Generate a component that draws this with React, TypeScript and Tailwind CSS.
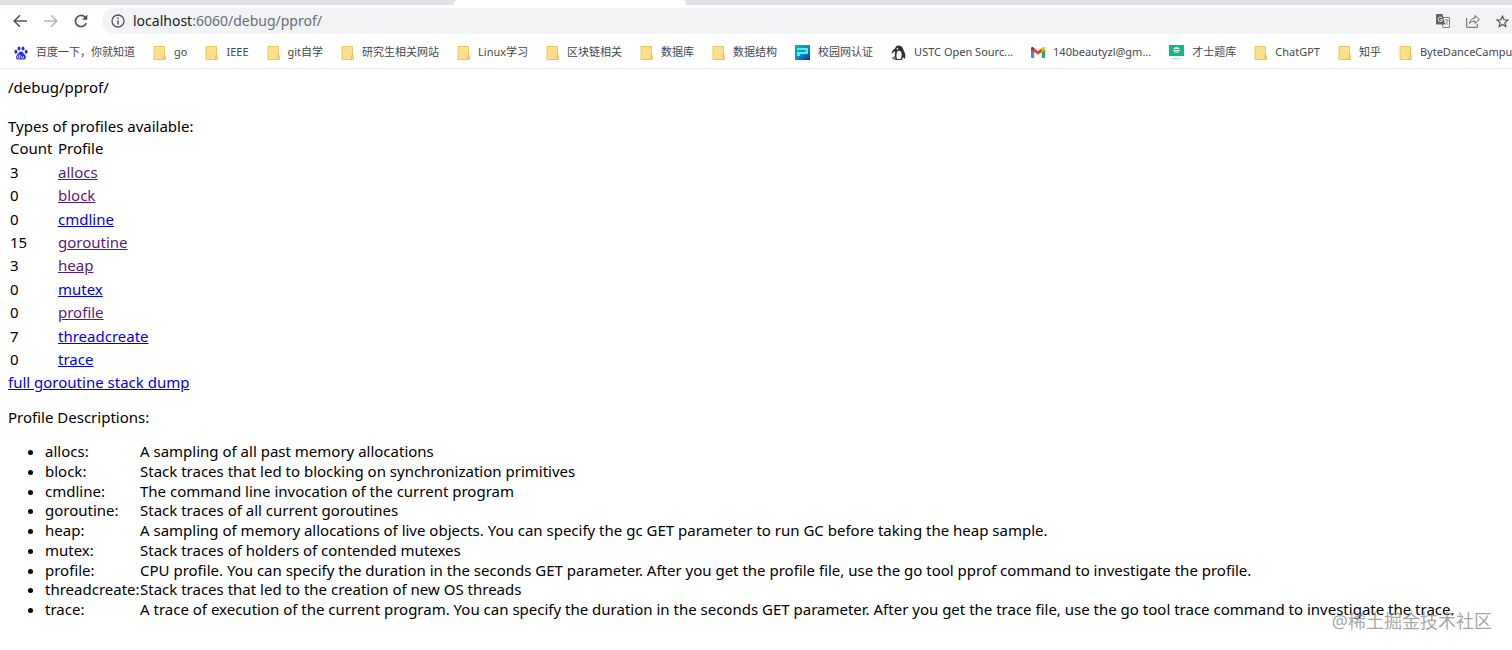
import type { ReactNode } from 'react'

const profiles = [
  { name: 'allocs', count: 3, visited: true, text: 'A sampling of all past memory allocations' },
  { name: 'block', count: 0, visited: true, text: 'Stack traces that led to blocking on synchronization primitives' },
  { name: 'cmdline', count: 0, visited: false, text: 'The command line invocation of the current program' },
  { name: 'goroutine', count: 15, visited: true, text: 'Stack traces of all current goroutines' },
  { name: 'heap', count: 3, visited: true, text: 'A sampling of memory allocations of live objects. You can specify the gc GET parameter to run GC before taking the heap sample.' },
  { name: 'mutex', count: 0, visited: false, text: 'Stack traces of holders of contended mutexes' },
  { name: 'profile', count: 0, visited: true, text: 'CPU profile. You can specify the duration in the seconds GET parameter. After you get the profile file, use the go tool pprof command to investigate the profile.' },
  { name: 'threadcreate', count: 7, visited: false, text: 'Stack traces that led to the creation of new OS threads' },
  { name: 'trace', count: 0, visited: false, text: 'A trace of execution of the current program. You can specify the duration in the seconds GET parameter. After you get the trace file, use the go tool trace command to investigate the trace.' },
]

const Folder = () => (
  <svg className="h-[14px] w-[13px] shrink-0" viewBox="0 0 13 14">
    <path d="M1 .5h10.5v8l1 1.5v3.5H1z" fill="#fee08a" stroke="#ecc65a" />
    <path d="M11.5 8.5 10 13.5" stroke="#e6bb48" fill="none" />
  </svg>
)

const Baidu = () => (
  <svg className="h-[14px] w-[14px] shrink-0" viewBox="0 0 14 14" fill="#2a2fd8">
    <ellipse cx="1.9" cy="5.8" rx="1.5" ry="2" />
    <ellipse cx="5" cy="2.5" rx="1.5" ry="2.1" />
    <ellipse cx="9" cy="2.5" rx="1.5" ry="2.1" />
    <ellipse cx="12.1" cy="5.8" rx="1.5" ry="2" />
    <path d="M7 5.6c1.8 0 2.3 1.8 3.6 2.9 1.8 1.5 1.8 4.9-.8 5.1-1 .1-1.8-.3-2.8-.3s-1.8.4-2.8.3c-2.6-.2-2.6-3.6-.8-5.1C4.7 7.4 5.2 5.6 7 5.6z" />
    <path d="M5.8 8.5v3.6H4.5a1 1 0 0 1 0-2.2h1.3M7.5 9.9v1.5q0 .7.7.7h1.2V9.9" stroke="#fff" strokeWidth=".7" fill="none" />
  </svg>
)

const Campus = () => (
  <svg className="h-[15px] w-[15px] shrink-0" viewBox="0 0 15 15">
    <defs>
      <linearGradient id="campus" x1="0" y1="0" x2="1" y2="1">
        <stop offset="0" stopColor="#08b5bd" />
        <stop offset=".5" stopColor="#0797c4" />
        <stop offset="1" stopColor="#0a2fa0" />
      </linearGradient>
    </defs>
    <path d="M0 0h15v15H0z" fill="url(#campus)" />
    <path d="M2 3h11v6H5v2H2V7h8.5V5H2z" fill="#5cebe4" />
  </svg>
)

const Penguin = () => (
  <svg className="h-[15px] w-[15px] shrink-0" viewBox="0 0 15 15">
    <path d="M5 1.5C6.5 0 9.5 0 11 2c1.2 1.5 1.5 3 2.2 4.5 1.3 2.5 1.8 5 .3 7.5l-1.5-2-1 3H5.5l-4-1 2.5-2.5C3.5 9 4 7.5 4 6L.5 9c0-2.5 2-5 3.5-5.5z" fill="#2b3338" />
    <path d="M6.5 6c2-.8 3.5 0 4 2 .3 2 .2 4-.8 6H6C5 11 5.5 8 6.5 6z" fill="#fff" />
    <path d="M5 3.5 7.5 3 6.5 5z" fill="#dfe5e8" />
    <path d="M1 12.5l2.5-1.5L5 14l-3 .5z" fill="#7b878d" />
  </svg>
)

const Gmail = () => (
  <svg className="h-[11px] w-[14px] shrink-0" viewBox="0 0 14 11">
    <path d="M0 2v8q0 1 1 1h2.2V4.5z" fill="#4285f4" />
    <path d="M14 2v8q0 1-1 1h-2.2V4.5z" fill="#34a853" />
    <path d="M10.8 1.2V5L14 2.6V1.5C14 0 12.4-.3 11.4.5z" fill="#fbbc04" />
    <path d="M3.2 5V1.2L7 4l3.8-2.8V5L7 7.8z" fill="#ea4335" />
    <path d="M0 1.5v1.1L3.2 5V1.2L2.6.5C1.6-.3 0 0 0 1.5z" fill="#c5221f" />
  </svg>
)

const Exam = () => (
  <svg className="h-[15px] w-[15px] shrink-0" viewBox="0 0 15 15">
    <path d="M0 0h15v11H0z" fill="#12b883" />
    <circle cx="7.5" cy="5" r="3" fill="#d8f6ec" />
    <path d="M5 4.5h5M6 6.5q1.5 1 3 0" stroke="#12b883" fill="none" />
    <path d="M3.5 13.5h8" stroke="#9fe3cc" />
  </svg>
)

type Bookmark = { label: string; icon?: ReactNode }

const bookmarks: Bookmark[] = [
  { label: '百度一下，你就知道', icon: <Baidu /> },
  { label: 'go' },
  { label: 'IEEE' },
  { label: 'git自学' },
  { label: '研究生相关网站' },
  { label: 'Linux学习' },
  { label: '区块链相关' },
  { label: '数据库' },
  { label: '数据结构' },
  { label: '校园网认证', icon: <Campus /> },
  { label: 'USTC Open Sourc...', icon: <Penguin /> },
  { label: '140beautyzl@gm...', icon: <Gmail /> },
  { label: '才士题库', icon: <Exam /> },
  { label: 'ChatGPT' },
  { label: '知乎' },
  { label: 'ByteDanceCampus' },
]

function TabStrip() {
  return (
    <div className="flex h-[5px] bg-[#dee1e6]">
      <div className="ml-[30%] h-full w-[232px] rounded-t-sm bg-white"></div>
    </div>
  )
}

function Toolbar() {
  return (
    <div className="flex h-8 items-center pl-3 text-[#5f6368]">
      <button aria-label="Back" className="flex h-4 w-4 items-center justify-center">
        <svg className="h-4 w-4" viewBox="0 0 16 16" fill="none" stroke="#50545a" strokeWidth="1.6">
          <path d="M15 8H2.5M8 2.2 2.2 8 8 13.8" />
        </svg>
      </button>
      <button aria-label="Forward" className="ml-[15px] flex h-4 w-4 items-center justify-center">
        <svg className="h-4 w-4" viewBox="0 0 16 16" fill="none" stroke="#b4b7ba" strokeWidth="1.5">
          <path d="M1 8h12.5M8 2.2 13.8 8 8 13.8" />
        </svg>
      </button>
      <button aria-label="Reload" className="ml-[14px] flex h-4 w-4 items-center justify-center">
        <svg className="h-4 w-4" viewBox="0 0 16 16" fill="none" stroke="#50545a" strokeWidth="1.7">
          <path d="M13.3 10A5.6 5.6 0 1 1 12 4.1L13.3 5.4" />
          <path d="M14.3 1.5v5.2H9.1z" fill="#50545a" stroke="none" />
        </svg>
      </button>
      <div className="ml-[13px] flex h-[26px] min-w-0 flex-1 items-center rounded-l-full bg-[#f1f3f4] pl-[9px]">
        <svg className="h-[14px] w-[14px] shrink-0" viewBox="0 0 14 14" fill="none" stroke="#50545a" strokeWidth="1.3">
          <circle cx="7" cy="7" r="6" />
          <path d="M7 6.2v4.2M7 3.5v1.4" strokeWidth="1.5" />
        </svg>
        <span className="ml-2 flex-1 text-sm text-[#6a6e73]">
          <span className="text-[#202124]">localhost</span>:6060/debug/pprof/
        </span>
        <button aria-label="Translate this page" className="h-[14px] w-[14px]">
          <svg className="h-[14px] w-[14px]" viewBox="0 0 14 14">
            <path d="M5 3.5h8.4v10H7z" fill="#fff" stroke="#777b80" />
            <path d="M0 1q0-1 1-1h5.5l2.7 10.5H1q-1 0-1-1z" fill="#5f6368" />
            <path d="M6.3 4.2A2.2 2.2 0 1 0 6.6 5.7H4.5" stroke="#fff" fill="none" />
            <path d="M8.5 6h4M10.5 5v1M9 10.5Q11.5 9 12 6M9.5 7.5q1 2 2.5 3" stroke="#777b80" strokeWidth=".8" fill="none" />
          </svg>
        </button>
        <button aria-label="Share" className="ml-4 h-[14px] w-[14px]">
          <svg className="h-[14px] w-[14px]" viewBox="0 0 14 14" fill="none" stroke="#5f6368">
            <path d="M.7 4v9.3h10.6V10" />
            <path d="M3.5 9.5C4 6 6 4.2 9 4V1.5l4.3 4-4.3 4V7C6.5 7 4.8 7.8 3.5 9.5z" />
          </svg>
        </button>
        <button aria-label="Bookmark this page" className="ml-4 mr-[3px] h-[13px] w-[13px]">
          <svg className="h-[13px] w-[13px]" viewBox="0 0 13 13" fill="none" stroke="#50545a" strokeWidth="1.2">
            <path d="M6.5 1.2 8 4.8l3.9.3-3 2.5.9 3.8-3.3-2-3.3 2 .9-3.8-3-2.5L5 4.8z" />
          </svg>
        </button>
      </div>
    </div>
  )
}

function BookmarkBar() {
  return (
    <nav className="flex h-8 items-center gap-[18px] overflow-hidden border-b border-[#e4e5e7] pl-[14px] text-[11px] text-[#45484c]">
      {bookmarks.map((b) => (
        <a key={b.label} href="#" className="flex shrink-0 items-center gap-2 whitespace-nowrap">
          {b.icon ?? <Folder />}
          {b.label}
        </a>
      ))}
    </nav>
  )
}

export default function App() {
  return (
    <div className="relative min-h-screen overflow-hidden bg-white font-['Noto_Sans','Noto_Sans_CJK_SC',sans-serif]">
      <TabStrip />
      <Toolbar />
      <BookmarkBar />

      {/* pprof index */}
      <main className="px-2 pt-2 text-[15px] leading-5 text-black">
        <p>/debug/pprof/</p>
        <p className="mt-[19px]">Types of profiles available:</p>
        <table className="h-[235px] border-separate border-spacing-x-[2px] border-spacing-y-0">
          <thead>
            <tr className="h-6">
              <th className="w-[46px] p-0 text-left font-normal">Count</th>
              <th className="p-0 text-left font-normal">Profile</th>
            </tr>
          </thead>
          <tbody>
            {profiles.map((p) => (
              <tr key={p.name}>
                <td className="p-0">{p.count}</td>
                <td className="p-0">
                  <a href="#" className={p.visited ? 'text-[#551a8b] underline' : 'text-[#0000ee] underline'}>{p.name}</a>
                </td>
              </tr>
            ))}
          </tbody>
        </table>
        <a href="#" className="mt-px block w-fit text-[#0000ee] underline">full goroutine stack dump</a>
        <p className="mt-[15px]">Profile Descriptions:</p>
        <ul className="mt-[14px] grid h-[178px] list-disc auto-rows-fr pl-[37px]">
          {profiles.map((p) => (
            <li key={p.name}>
              <div className="flex whitespace-nowrap">
                <span className="w-[95px] shrink-0">{p.name}:</span>
                <span>{p.text}</span>
              </div>
            </li>
          ))}
        </ul>
      </main>

      {/* Watermark */}
      <span className="absolute right-5 bottom-[17px] text-lg leading-6 text-[#8f8f8f]/80">@稀土掘金技术社区</span>
    </div>
  )
}
